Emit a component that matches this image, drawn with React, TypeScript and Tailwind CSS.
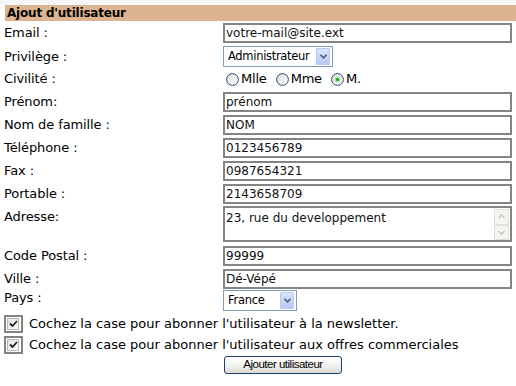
import React from "react";

const F = { fontFamily: '"DejaVu Sans", Verdana, sans-serif' } as React.CSSProperties;

function Label({ children, cls = "" }: { children: React.ReactNode; cls?: string }) {
  return <div className={`w-[219px] shrink-0 text-[13px] tracking-[-0.1px] text-black ${cls}`}>{children}</div>;
}

function TextInput({ value }: { value: string }) {
  return (
    <div className="h-[20px] w-[289px] border-2 border-[#848484] bg-white flex items-center pl-[1px] text-[12px] text-[#111]">
      {value}
    </div>
  );
}

function Arrow() {
  return (
    <div className="w-[14px] h-[17px] bg-gradient-to-b from-[#d9e3fb] to-[#b7c8f5] border border-[#b9c9ef] flex items-center justify-center rounded-[1px] shrink-0">
      <svg width="7" height="5" viewBox="0 0 7 5">
        <path d="M0.5 0.8 L3.5 3.8 L6.5 0.8" stroke="#4d6185" strokeWidth="1.6" fill="none" />
      </svg>
    </div>
  );
}

function Select({ value, w }: { value: string; w: string }) {
  return (
    <div className={`h-[21px] ${w} border border-[#7f9db9] bg-white flex items-center justify-between pl-[4px] pr-[2px] text-[11.5px] tracking-[-0.3px] text-black`}>
      <span className="whitespace-nowrap">{value}</span>
      <Arrow />
    </div>
  );
}

function Radio({ checked }: { checked?: boolean }) {
  return (
    <svg width="13" height="13" viewBox="0 0 13 13" className="shrink-0">
      <defs>
        <linearGradient id="rg" x1="0" y1="0" x2="1" y2="1">
          <stop offset="0" stopColor="#dcdcd5" />
          <stop offset="1" stopColor="#ffffff" />
        </linearGradient>
      </defs>
      <circle cx="6.5" cy="6.5" r="5.9" fill="url(#rg)" stroke="#2f4f6f" strokeWidth="1" />
      {checked && <circle cx="6.5" cy="6.5" r="2.6" fill="#9ee39e" />}
      {checked && <circle cx="6.5" cy="6.5" r="1.6" fill="#21a121" />}
    </svg>
  );
}

function Check() {
  return (
    <div className="w-[19px] h-[18px] border-2 border-[#848484] bg-white shrink-0 flex items-start justify-start p-[1px]">
      <div className="w-[12px] h-[12px] border border-[#b8b8b8] bg-gradient-to-br from-[#e2e2de] to-white flex items-center justify-center">
        <svg width="9" height="8" viewBox="0 0 9 8">
          <path d="M1 3.5 L3.5 6 L8 1" stroke="#1f1f1f" strokeWidth="1.8" fill="none" />
        </svg>
      </div>
    </div>
  );
}

export default function App() {
  return (
    <div className="w-[516px] h-[386px] bg-white overflow-hidden" style={F}>
      <div className="h-[5px] bg-[#f7f7f7]" />
      <div className="ml-[5px] h-[16px] bg-[#dcb492] flex items-center pl-[2px] text-[12px] font-bold tracking-[-0.2px] text-black">
        Ajout d'utilisateur
      </div>
      <div className="flex flex-col pl-[4px]">
        <div className="flex items-center h-[24px]">
          <Label>Email :</Label>
          <TextInput value="votre-mail@site.ext" />
        </div>
        <div className="flex items-center h-[23px]">
          <Label>Privilège :</Label>
          <Select value="Administrateur" w="w-[110px]" />
        </div>
        <div className="flex items-center h-[22px]">
          <Label>Civilité :</Label>
          <div className="flex items-center text-[13px] tracking-[-0.2px] text-black pl-[3px]">
            <Radio />
            <span className="ml-[2px] mr-[9px]">Mlle</span>
            <Radio />
            <span className="ml-[2px] mr-[9px]">Mme</span>
            <Radio checked />
            <span className="ml-[2px]">M.</span>
          </div>
        </div>
        <div className="flex items-center h-[23px]">
          <Label>Prénom:</Label>
          <TextInput value="prénom" />
        </div>
        <div className="flex items-center h-[23px]">
          <Label>Nom de famille :</Label>
          <TextInput value="NOM" />
        </div>
        <div className="flex items-center h-[23px]">
          <Label>Téléphone :</Label>
          <TextInput value="0123456789" />
        </div>
        <div className="flex items-center h-[23px]">
          <Label>Fax :</Label>
          <TextInput value="0987654321" />
        </div>
        <div className="flex items-center h-[23px]">
          <Label>Portable :</Label>
          <TextInput value="2143658709" />
        </div>
        <div className="flex items-start h-[39px] pt-[1px]">
          <Label cls="pt-[1px]">Adresse:</Label>
          <div className="h-[36px] w-[289px] border-2 border-[#848484] bg-white flex text-[12px] text-[#111]">
            <div className="flex-1 pl-[1px] pt-[1px]">23, rue du developpement</div>
            <div className="w-[15px] flex flex-col mr-[1px] mt-[1px]">
              <div className="h-[16px] border border-[#e2e2dc] bg-[#f4f4f0] flex items-center justify-center">
                <svg width="7" height="5" viewBox="0 0 7 5"><path d="M0.5 4 L3.5 1 L6.5 4" stroke="#c6c6bf" strokeWidth="1.5" fill="none" /></svg>
              </div>
              <div className="h-[16px] border border-[#e2e2dc] bg-[#f4f4f0] flex items-center justify-center">
                <svg width="7" height="5" viewBox="0 0 7 5"><path d="M0.5 1 L3.5 4 L6.5 1" stroke="#c6c6bf" strokeWidth="1.5" fill="none" /></svg>
              </div>
            </div>
          </div>
        </div>
        <div className="flex items-center h-[23px]">
          <Label>Code Postal :</Label>
          <TextInput value="99999" />
        </div>
        <div className="flex items-center h-[23px]">
          <Label>Ville :</Label>
          <TextInput value="Dé-Vépé" />
        </div>
        <div className="flex items-start h-[23px]">
          <Label cls="-mt-[2px]">Pays :</Label>
          <Select value="France" w="w-[74px]" />
        </div>
        <div className="flex items-center h-[21px]">
          <Check />
          <span className="ml-[6px] text-[13px] text-black">Cochez la case pour abonner l'utilisateur à la newsletter.</span>
        </div>
        <div className="flex items-center h-[21px]">
          <Check />
          <span className="ml-[6px] text-[13px] text-black">Cochez la case pour abonner l'utilisateur aux offres commerciales</span>
        </div>
        <div className="flex pl-[220px] pt-[1px]">
          <div
            className="w-[118px] h-[18px] rounded-[3px] border border-[#1c3f77] bg-gradient-to-b from-white via-[#f3f3ef] to-[#dcdad0] flex items-center justify-center text-[11.5px] tracking-[-0.5px] text-black"
            style={{ fontFamily: '"Liberation Sans", Arial, sans-serif' }}
          >
            Ajouter utilisateur
          </div>
        </div>
      </div>
    </div>
  );
}
